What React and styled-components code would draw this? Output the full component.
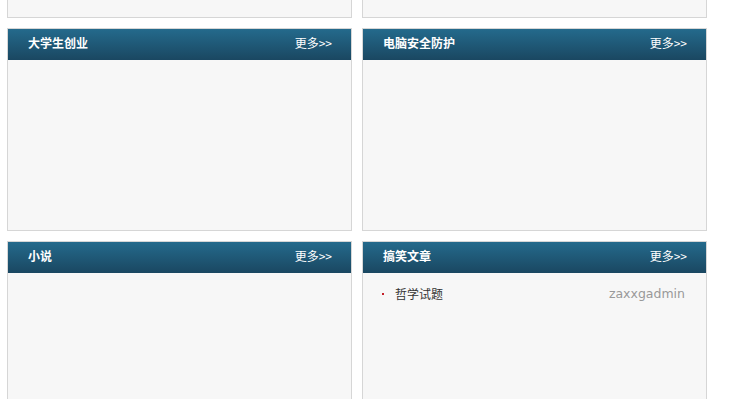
import styled, { createGlobalStyle } from "styled-components";

const GlobalStyle = createGlobalStyle`
  html, body {
    margin: 0;
    padding: 0;
    background: #ffffff;
    overflow: hidden;
  }
  body {
    font-family: "Liberation Sans", "Noto Sans CJK SC", sans-serif;
    font-size: 12px;
    color: #333;
  }
`;

const Grid = styled.div`
  display: grid;
  grid-template-columns: 345px 345px;
  grid-template-rows: 18px 203px 203px;
  column-gap: 10px;
  row-gap: 10px;
  padding-left: 7px;
`;

// $tail: only the bottom edge of a panel scrolled above the window
const Panel = styled.div`
  box-sizing: border-box;
  border: 1px solid #d6d6d6;
  border-top: ${({ $tail }) => ($tail ? "none" : "1px solid #d6d6d6")};
  background: #f7f7f7;
  display: flex;
  flex-direction: column;
`;

const PanelHead = styled.div`
  height: 31px;
  box-sizing: border-box;
  padding: 0 19px 3px 20px;
  flex-shrink: 0;
  display: flex;
  align-items: center;
  justify-content: space-between;
  background: linear-gradient(#246a8c, #1a4761);
  color: #fff;
  font-family: "Noto Sans CJK SC", sans-serif;
  font-size: 12px;
  line-height: 14px;

  .title {
    font-weight: 700;
  }
  .more {
    font-weight: 400;
  }
`;

const PanelBody = styled.ul`
  list-style: none;
  margin: 0;
  padding: 8px 21px 0 19px;
`;

const Item = styled.li`
  display: flex;
  align-items: center;
  line-height: 26px;

  .dot {
    width: 2px;
    height: 2px;
    background: #c4202a;
    margin-right: 11px;
  }
  .name {
    flex: 1;
    font-family: "Noto Sans CJK SC", sans-serif;
    font-size: 12px;
    color: #333;
  }
  .author {
    font-family: "DejaVu Sans", sans-serif;
    font-size: 12.5px;
    color: #999;
  }
`;

const panels = [
  { title: "大学生创业", items: [] },
  { title: "电脑安全防护", items: [] },
  { title: "小说", items: [] },
  { title: "搞笑文章", items: [{ name: "哲学试题", author: "zaxxgadmin" }] },
];

export default function App() {
  return (
    <>
      <GlobalStyle />
      <Grid>
        <Panel $tail />
        <Panel $tail />
        {panels.map((p, i) => (
          <Panel key={`panel${i}`}>
            <PanelHead>
              <span className="title">{p.title}</span>
              <span className="more">更多&gt;&gt;</span>
            </PanelHead>
            <PanelBody>
              {p.items.map((it, j) => (
                <Item key={`item${j}`}>
                  <span className="dot" />
                  <span className="name">{it.name}</span>
                  <span className="author">{it.author}</span>
                </Item>
              ))}
            </PanelBody>
          </Panel>
        ))}
      </Grid>
    </>
  );
}
